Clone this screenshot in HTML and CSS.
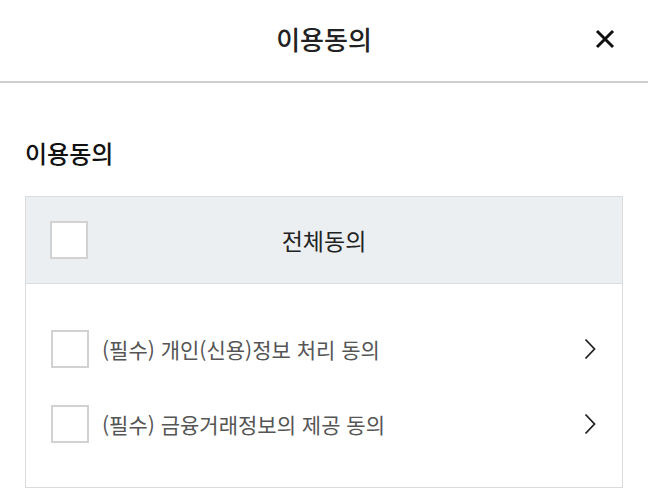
FILE: index.html
```html
<!DOCTYPE html>
<html lang="ko">
<head>
<meta charset="utf-8">
<link rel="stylesheet" href="styles.css">
</head>
<body>
<header class="topbar">
  <h1 class="topbar-title">이용동의</h1>
  <button class="close-btn" aria-label="닫기">
    <svg width="22" height="22" viewBox="0 0 22 22"><path d="M3 3 L19 19 M19 3 L3 19" stroke="#111" stroke-width="3" fill="none"/></svg>
  </button>
</header>
<main class="content">
  <h2 class="section-title">이용동의</h2>
  <div class="agree-box">
    <div class="agree-all">
      <span class="checkbox"></span>
      <span class="agree-all-label">전체동의</span>
    </div>
    <ul class="agree-list">
      <li class="agree-item">
        <span class="checkbox"></span>
        <span class="agree-label">(필수) 개인(신용)정보 처리 동의</span>
        <svg class="chevron" width="12" height="22" viewBox="0 0 12 22"><path d="M1.5 1.5 L10.5 11 L1.5 20.5" stroke="#222" stroke-width="1.8" fill="none"/></svg>
      </li>
      <li class="agree-item">
        <span class="checkbox"></span>
        <span class="agree-label">(필수) 금융거래정보의 제공 동의</span>
        <svg class="chevron" width="12" height="22" viewBox="0 0 12 22"><path d="M1.5 1.5 L10.5 11 L1.5 20.5" stroke="#222" stroke-width="1.8" fill="none"/></svg>
      </li>
    </ul>
  </div>
</main>
</body>
</html>
```
FILE: styles.css
```css
* { box-sizing: border-box; }
html, body { margin: 0; padding: 0; background: #fff; }
body {
  font-family: "Noto Sans CJK KR", "Noto Sans", sans-serif;
  color: #222;
}
.topbar {
  height: 83px;
  border-bottom: 2px solid #cfcfcf;
  display: flex;
  align-items: center;
  justify-content: center;
  position: relative;
}
.topbar-title {
  margin: 0 0 4px;
  font-size: 26px;
  font-weight: 500;
  color: #222;
  line-height: 1;
}
.close-btn {
  position: absolute;
  right: 32px;
  top: 28px;
  width: 22px;
  height: 22px;
  padding: 0;
  border: 0;
  background: none;
  display: flex;
}
.content {
  padding: 0 25px;
}
.section-title {
  margin: 56px 0 0;
  font-size: 24px;
  font-weight: 500;
  line-height: 28px;
  color: #111;
}
.agree-box {
  margin-top: 29px;
  border: 1px solid #dcdcdc;
  height: 292px;
}
.agree-all {
  height: 87px;
  background: #eceff1;
  border-bottom: 1px solid #dcdcdc;
  display: flex;
  align-items: center;
  padding-left: 24px;
  position: relative;
}
.agree-all-label {
  position: absolute;
  left: 0;
  right: 0;
  text-align: center;
  font-size: 23px;
  color: #222;
  pointer-events: none;
}
.checkbox {
  display: block;
  width: 38px;
  height: 38px;
  border: 2px solid #d2d2d2;
  background: #fff;
  flex: none;
}
.agree-list {
  list-style: none;
  margin: 0;
  padding: 46px 26px 0 25px;
  display: flex;
  flex-direction: column;
  gap: 37px;
}
.agree-item {
  display: flex;
  align-items: center;
  height: 38px;
}
.agree-label {
  margin-left: 13px;
  flex: 1;
  font-size: 21px;
  color: #555;
}
.chevron { flex: none; }
```
